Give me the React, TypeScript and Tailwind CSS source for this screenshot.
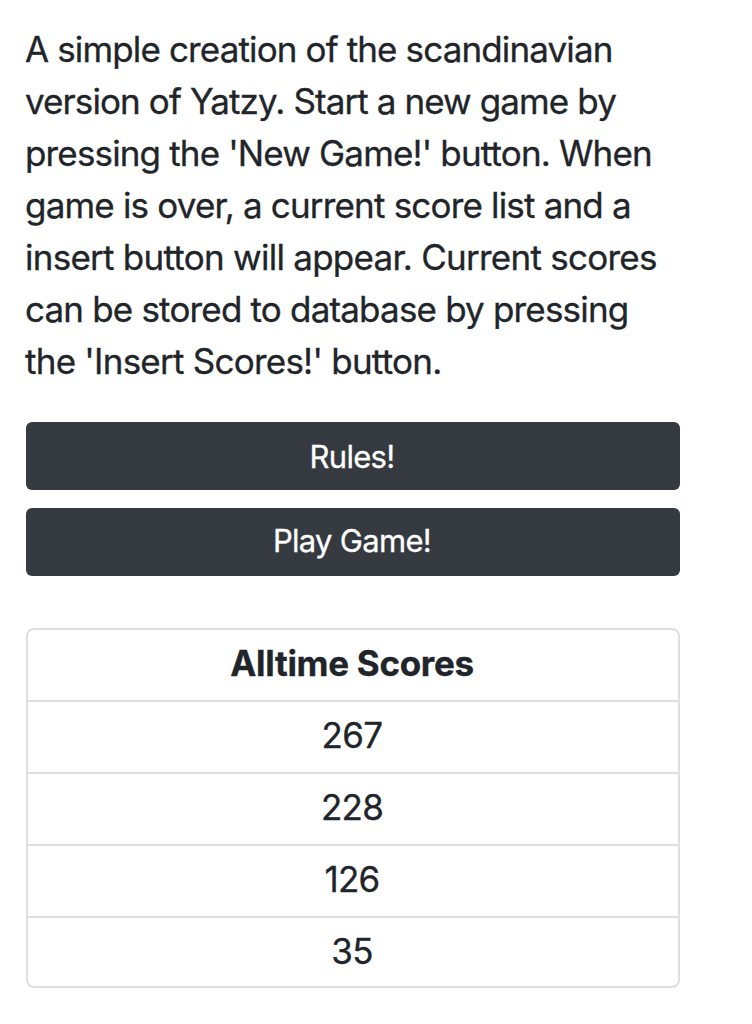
const lines: [string, string][] = [
  ["A simple creation of the scandinavian", "tracking-[-0.87px]"],
  ["version of Yatzy. Start a new game by", "tracking-[-0.9px]"],
  ["pressing the 'New Game!' button. When", "tracking-[-0.85px]"],
  ["game is over, a current score list and a", "tracking-[-0.82px]"],
  ["insert button will appear. Current scores", "tracking-[-0.74px]"],
  ["can be stored to database by pressing", "tracking-[-0.82px]"],
  ["the 'Insert Scores!' button.", "tracking-[-0.76px]"],
];

const scores = [267, 228, 126, 35];

export default function App() {
  return (
    <main className="h-[1024px] w-full overflow-hidden bg-white pt-[23px] pr-[72px] pl-[26px] font-['Inter',sans-serif] text-[#212529] [-webkit-text-stroke:0.3px]">
      <p className="-ml-px text-[35px] leading-[52px]">
        {lines.map(([text, tracking]) => (
          <span key={text} className={`block whitespace-nowrap ${tracking}`}>{text}</span>
        ))}
      </p>
      <div className="mt-[35px] flex flex-col gap-[18px] text-[31px] tracking-[-0.7px] text-white">
        <button className="h-[68px] rounded-[6px] bg-[#343a40] pt-[2px] pr-[2px]">Rules!</button>
        <button className="h-[68px] rounded-[6px] bg-[#343a40] pr-[2px] pb-[2px]">Play Game!</button>
      </div>
      <ul className="mt-[52px] overflow-hidden rounded-lg border-2 border-[#dfdfdf] text-center text-[35px] leading-[66px]">
        <li className="h-[70px] pr-[2px] font-bold tracking-[-0.3px]">Alltime Scores</li>
        {scores.map((score) => (
          <li key={score} className="h-[72px] border-t-2 border-[#dfdfdf] pr-[2px] tracking-[-0.7px] last:h-[70px]">
            {score}
          </li>
        ))}
      </ul>
    </main>
  );
}
